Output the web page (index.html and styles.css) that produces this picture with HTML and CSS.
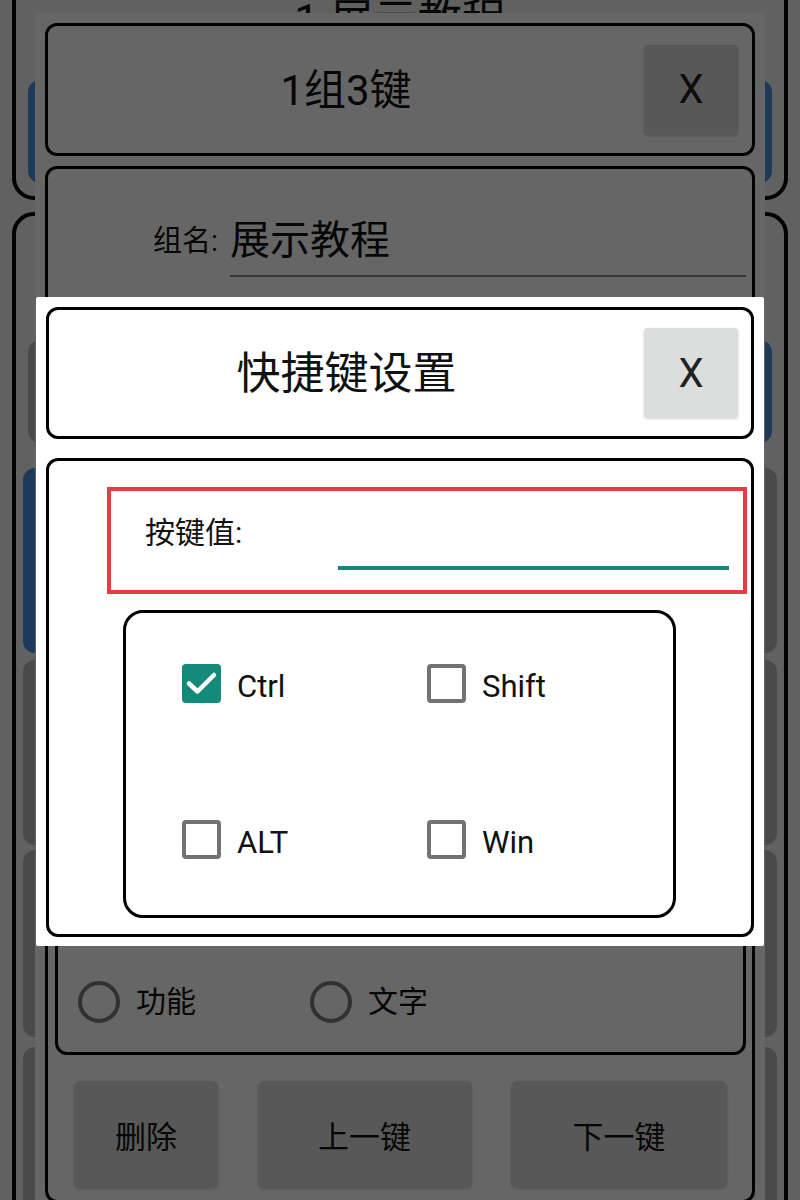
FILE: index.html
```html
<!DOCTYPE html>
<html lang="zh">
<head>
<meta charset="utf-8">
<title>快捷键设置</title>
<link rel="stylesheet" href="styles.css">
</head>
<body>
  <div class="screen">
    <section class="card card-main">
      <h1 class="card-title">1 展示教程</h1>
      <div class="group-keys">
        <div class="key key-blue"></div>
        <div class="key key-blue"></div>
      </div>
    </section>
    <section class="card card-keys">
      <div class="key-row row-a"><div class="key"></div><div class="key key-blue"></div></div>
      <div class="key-row row-b"><div class="key key-blue"></div><div class="key"></div></div>
      <div class="key-row row-c"><div class="key"></div><div class="key"></div></div>
      <div class="key-row row-d"><div class="key"></div><div class="key"></div></div>
      <div class="key-row row-e"><div class="key"></div><div class="key"></div></div>
    </section>
  </div>

  <div class="dialog dialog-group">
    <div class="dlg-head">
      <div class="dlg-title">1组3键</div>
      <button class="dlg-close" type="button">X</button>
    </div>
    <div class="dlg-body">
      <div class="name-row">
        <span class="name-label">组名:</span>
        <div class="name-field">展示教程</div>
      </div>
      <div class="type-box">
        <label class="radio"><span class="radio-dot"></span>功能</label>
        <label class="radio"><span class="radio-dot"></span>文字</label>
      </div>
      <div class="nav-row">
        <button class="nav-btn nav-del" type="button">删除</button>
        <button class="nav-btn nav-prev" type="button">上一键</button>
        <button class="nav-btn nav-next" type="button">下一键</button>
      </div>
    </div>
  </div>

  <div class="scrim"></div>

  <div class="dialog dialog-hotkey">
    <div class="dlg-head">
      <div class="dlg-title">快捷键设置</div>
      <button class="dlg-close" type="button">X</button>
    </div>
    <div class="dlg-body">
      <div class="key-field">
        <span class="key-label">按键值:</span>
        <div class="key-input"></div>
      </div>
      <div class="mods">
        <label class="mod">
          <span class="box box-on"><svg viewBox="0 0 39 39" width="39" height="39"><path d="M7 19.5 L15.5 27.5 L32 11" fill="none" stroke="#fff" stroke-width="4.5" stroke-linecap="round" stroke-linejoin="round"/></svg></span>
          <span class="mod-text">Ctrl</span>
        </label>
        <label class="mod">
          <span class="box"></span>
          <span class="mod-text">Shift</span>
        </label>
        <label class="mod">
          <span class="box"></span>
          <span class="mod-text">ALT</span>
        </label>
        <label class="mod">
          <span class="box"></span>
          <span class="mod-text">Win</span>
        </label>
      </div>
    </div>
  </div>
</body>
</html>
```

FILE: styles.css
```css
body {
  margin: 0;
  width: 800px;
  height: 1200px;
  overflow: hidden;
  position: relative;
  background: #f2f2f2;
  font-family: Roboto, "Noto Sans CJK SC", sans-serif;
  color: #111;
}

/* underlying screen */
.screen {
  padding: 0 12px;
}

.card {
  border: 4px solid #000;
  border-radius: 22px;
  background: #f2f2f2;
}

.card-main {
  margin-top: -30px;
  padding: 21px 12px 13px;
}

.card-title {
  margin: 0;
  font-size: 44px;
  line-height: 52px;
  font-weight: 400;
  text-align: center;
}

.group-keys {
  margin-top: 33px;
  display: grid;
  grid-template-columns: 1fr 1fr;
  gap: 16px;
}

.group-keys .key {
  height: 103px;
}

.key {
  background: #b8b8b8;
  border-radius: 12px;
}

.key-blue {
  background: #4a92e0;
}

.card-keys {
  margin-top: 12px;
  padding: 124px 7px 0;
}

.key-row {
  display: grid;
  grid-template-columns: 1fr 1fr;
  gap: 16px;
}

.row-a { height: 103px; margin: 0 5px; }
.row-b { height: 185px; margin-top: 25px; }
.row-c { height: 185px; margin-top: 7px; }
.row-d { height: 187px; margin-top: 5px; }
.row-e { height: 185px; margin-top: 10px; }

/* dialogs */
.dialog {
  position: absolute;
  background: #fff;
  box-sizing: border-box;
  display: flex;
  flex-direction: column;
}

.dialog-group {
  left: 35px;
  top: 13px;
  width: 730px;
  height: 1200px;
  padding: 10px;
  gap: 10px;
}

.dialog-hotkey {
  left: 36px;
  top: 297px;
  width: 728px;
  padding: 10px 10px 9px;
  gap: 19px;
  border-radius: 2px;
}

.dlg-head {
  box-sizing: border-box;
  border: 3px solid #000;
  border-radius: 12px;
  display: flex;
  align-items: center;
}

.dialog-group .dlg-head {
  height: 133px;
  padding-right: 14px;
}

.dialog-hotkey .dlg-head {
  height: 132px;
  padding-right: 13px;
}

.dlg-title {
  flex: 1;
  text-align: center;
  font-size: 42px;
  line-height: 1.2;
  padding-top: 3px;
}

.dialog-hotkey .dlg-title {
  font-size: 44px;
}

.dlg-close {
  width: 94px;
  height: 90px;
  padding: 0;
  border: 0;
  border-radius: 4px;
  background: #dcdddd;
  box-shadow: 0 1px 3px rgba(0, 0, 0, 0.18);
  font-family: Roboto, sans-serif;
  font-size: 40px;
  color: #222;
}

.dlg-body {
  border: 3px solid #000;
  border-radius: 12px;
}

.dialog-group .dlg-body {
  flex: 1;
  min-height: 0;
}

/* group editor */
.name-row {
  display: flex;
  align-items: flex-start;
  padding: 44px 6px 0 105px;
}

.name-label {
  font-size: 29px;
  line-height: 40px;
  margin-top: 8px;
}

.name-field {
  flex: 1;
  margin-left: 12px;
  font-size: 40px;
  line-height: 52px;
  padding-top: 2px;
  padding-bottom: 8px;
  border-bottom: 2px solid #8a8a8a;
}

.type-box {
  box-sizing: border-box;
  height: 735px;
  margin: 43px 6px 0 7px;
  padding: 0 0 29px 20px;
  border: 3px solid #000;
  border-radius: 12px;
  display: flex;
  align-items: flex-end;
}

.radio {
  width: 232px;
  display: flex;
  align-items: center;
  gap: 16px;
  font-size: 30px;
  line-height: 42px;
}

.radio-dot {
  width: 42px;
  height: 42px;
  box-sizing: border-box;
  border: 4px solid #7a7a7a;
  border-radius: 50%;
}

.nav-row {
  margin-top: 26px;
  padding: 0 25px 0 26px;
  display: flex;
  justify-content: space-between;
}

.nav-btn {
  height: 107px;
  border: 0;
  border-radius: 6px;
  background: #dcdcdc;
  box-shadow: 0 1px 3px rgba(0, 0, 0, 0.2);
  font-family: Roboto, "Noto Sans CJK SC", sans-serif;
  font-size: 31px;
  color: #111;
}

.nav-del { width: 144px; }
.nav-prev { width: 214px; }
.nav-next { width: 216px; }

.scrim {
  position: absolute;
  inset: 0;
  background: rgba(0, 0, 0, 0.6);
}

/* hotkey dialog */
.dialog-hotkey .dlg-body {
  padding: 26px 0 16px;
}

.key-field {
  box-sizing: border-box;
  height: 107px;
  margin: 0 4px 0 58px;
  padding: 0 14px 20px 34px;
  border: 4px solid #e0403f;
  display: flex;
  align-items: flex-start;
}

.key-label {
  margin-top: 24px;
  font-size: 30px;
  line-height: 36px;
}

.key-input {
  width: 391px;
  height: 75px;
  margin-left: auto;
  border-bottom: 4px solid #13857a;
}

.mods {
  margin: 16px 75px 0 74px;
  padding: 51px 0 56px 56px;
  border: 3px solid #000;
  border-radius: 20px;
  display: grid;
  grid-template-columns: 245px auto;
  row-gap: 117px;
}

.mod {
  height: 39px;
  display: flex;
  align-items: center;
  gap: 16px;
}

.box {
  width: 39px;
  height: 39px;
  box-sizing: border-box;
  border: 4px solid #727272;
  border-radius: 4px;
  display: block;
}

.box-on {
  border: 0;
  background: #158a7b;
}

.box svg {
  display: block;
}

.mod-text {
  font-size: 31px;
  line-height: 33px;
  padding-top: 6px;
}
```
